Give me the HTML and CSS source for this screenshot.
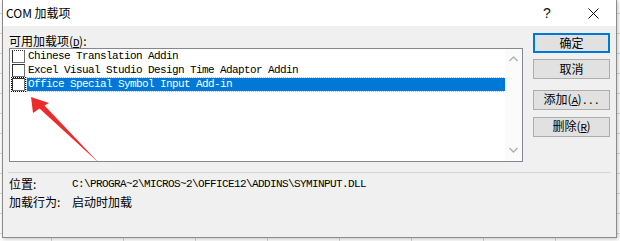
FILE: index.html
```html
<!DOCTYPE html>
<html lang="zh-CN">
<head>
    <meta charset="UTF-8">
    <title>COM 加载项</title>
    <link rel="stylesheet" href="styles.css">
</head>
<body>
    <div class="dialog">
        <!-- Title bar -->
        <div class="titlebar">
            <span class="title-text">COM 加载项</span>
            <span class="title-btn">?</span>
            <span class="title-btn">
                <svg width="11" height="11" viewBox="0 0 11 11"><path d="M0.5 0.5L10.5 10.5M10.5 0.5L0.5 10.5" stroke="#111" stroke-width="1"/></svg>
            </span>
        </div>

        <div class="content">
            <div class="main-row">
                <div class="list-col">
                    <div class="list-label">可用加载项(<span class="mono"><u>D</u></span>):</div>
                    <div class="listbox">
                        <div class="items">
                            <div class="item">
                                <span class="check focus-top"></span>
                                <span class="item-text">Chinese Translation Addin</span>
                            </div>
                            <div class="item">
                                <span class="check"></span>
                                <span class="item-text">Excel Visual Studio Design Time Adaptor Addin</span>
                            </div>
                            <div class="item selected">
                                <span class="check focus"></span>
                                <span class="item-text">Office Special Symbol Input Add-in</span>
                            </div>
                        </div>
                        <div class="scrollbar">
                            <svg width="9" height="6" viewBox="0 0 9 6"><path d="M0.5 5L4.5 1L8.5 5" fill="none" stroke="#b0b0b0" stroke-width="1.4"/></svg>
                            <svg width="9" height="6" viewBox="0 0 9 6"><path d="M0.5 1L4.5 5L8.5 1" fill="none" stroke="#b0b0b0" stroke-width="1.4"/></svg>
                        </div>
                    </div>
                </div>

                <div class="btn-col">
                    <button class="btn default">确定</button>
                    <button class="btn cancel">取消</button>
                    <button class="btn add">添加(<span class="mono"><u>A</u></span>)<span class="mono">...</span></button>
                    <button class="btn remove">删除(<span class="mono"><u>R</u></span>)</button>
                </div>
            </div>

            <div class="separator"></div>

            <div class="info-row first">
                <span class="info-label">位置:</span>
                <span class="mono path">C:\PROGRA~2\MICROS~2\OFFICE12\ADDINS\SYMINPUT.DLL</span>
            </div>
            <div class="info-row">
                <span class="info-label">加载行为:</span>
                <span>启动时加载</span>
            </div>
        </div>

        <!-- red annotation arrow -->
        <svg class="arrow" width="120" height="180" viewBox="0 0 120 180">
            <polygon points="30,97 32,113 38.5,108.5 98,163 43.5,105.5 48,103" fill="#ee2b2b"/>
        </svg>
    </div>
</body>
</html>
```

FILE: styles.css
```css
/* Page behind the dialog: spreadsheet grid */
body {
    margin: 0;
    width: 620px;
    height: 241px;
    overflow: hidden;
    font-family: "Noto Sans CJK SC", "Liberation Sans", sans-serif;
    font-size: 12px;
    color: #000;
    background-color: #fff;
    background-image:
        repeating-linear-gradient(to right, transparent 0, transparent 71px, #d6d6d6 71px, #d6d6d6 72px),
        repeating-linear-gradient(to bottom, transparent 0, transparent 19px, #d6d6d6 19px, #d6d6d6 20px);
    background-position: -20px 0, 0 -6px;
}

.mono {
    font-family: "Liberation Mono", monospace;
    font-size: 11px;
    letter-spacing: -0.6px;
}

/* Dialog window */
.dialog {
    position: relative;
    margin-left: 2px;
    width: 615px;
    height: 238px;
    box-sizing: border-box;
    border: 1px solid #8c8c8c;
    border-top: none;
    background-color: #f0f0f0;
    box-shadow: 1px 1px 4px rgba(0, 0, 0, 0.25);
}

.titlebar {
    height: 26px;
    background-color: #fff;
    display: flex;
    align-items: center;
}

.title-text {
    flex-grow: 1;
    padding-left: 3px;
    font-size: 12px;
    line-height: 26px;
}

.title-btn {
    width: 46px;
    height: 26px;
    display: flex;
    justify-content: center;
    align-items: center;
    font-family: "Liberation Sans", sans-serif;
    font-size: 14px;
    color: #111;
}

/* Content */
.content {
    padding: 7px 6px 0 6px;
}

.main-row {
    display: flex;
    gap: 10px;
}

.list-col {
    width: 514px;
}

.list-label {
    height: 15px;
    line-height: 15px;
}

.listbox {
    height: 114px;
    box-sizing: border-box;
    border: 1px solid #828790;
    background-color: #fff;
    display: flex;
}

.items {
    flex-grow: 1;
}

.item {
    height: 14px;
    display: flex;
    align-items: center;
    padding-left: 2px;
}

.check {
    width: 13px;
    height: 13px;
    box-sizing: border-box;
    border: 1px solid #303030;
    border-right-color: #707070;
    border-bottom-color: #707070;
    background-color: #fff;
    margin-right: 2px;
    flex-shrink: 0;
}

.check.focus {
    outline: 1px dotted #000;
}

.check.focus-top {
    border-top-style: dotted;
}

.item-text {
    flex-grow: 1;
    height: 13px;
    line-height: 13px;
    padding-left: 1px;
    font-family: "Liberation Mono", monospace;
    font-size: 11px;
    letter-spacing: -0.6px;
    white-space: pre;
}

.item.selected .item-text {
    background-color: #0078d7;
    color: #fff;
    outline: 1px dotted #9cc4e8;
}

.scrollbar {
    width: 17px;
    background-color: #fbfbfb;
    display: flex;
    flex-direction: column;
    justify-content: space-between;
    align-items: center;
    padding: 7px 0 8px 0;
}

/* Buttons */
.btn-col {
    width: 77px;
    display: flex;
    flex-direction: column;
}

.btn {
    height: 20px;
    padding: 0;
    border: 1px solid #adadad;
    background-color: #e1e1e1;
    font-family: "Noto Sans CJK SC", sans-serif;
    font-size: 12px;
    color: #000;
    line-height: 16px;
}

.btn.default {
    border: 2px solid #0078d7;
}

.btn.cancel {
    margin-top: 6px;
}

.btn.add {
    margin-top: 11px;
}

.btn.remove {
    margin-top: 7px;
}

/* Bottom info */
.separator {
    height: 1px;
    margin: 10px -1px 0 -1px;
    background-color: #d5d5d5;
}

.info-row {
    display: flex;
    height: 18px;
    line-height: 18px;
}

.info-row.first {
    margin-top: 2px;
}

.info-label {
    width: 63px;
}

.path {
    white-space: pre;
}

.arrow {
    position: absolute;
    left: -2px;
    top: 0;
}
```
